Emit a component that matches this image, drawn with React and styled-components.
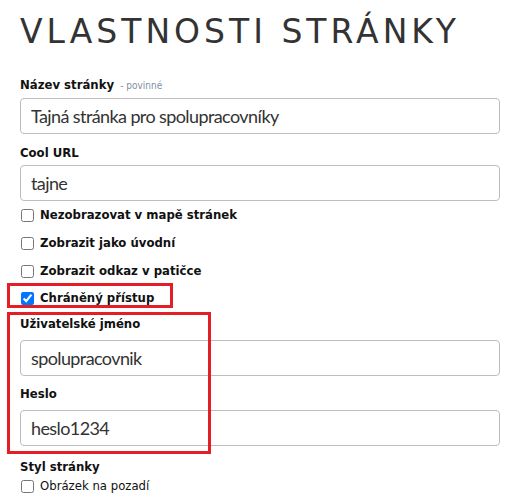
import React from 'react';
import styled, { createGlobalStyle } from 'styled-components';

const GlobalStyle = createGlobalStyle`
  body {
    margin: 0;
    background: #fff;
    color: #222;
    font-family: 'DejaVu Sans Condensed', 'DejaVu Sans', Verdana, sans-serif;
  }
`;

const Page = styled.div`
  width: 480px;
  padding: 0 8px 0 20px;
`;

const Title = styled.h1`
  margin: 0;
  padding-top: 13px;
  height: 67px;
  font-family: 'DejaVu Sans', Verdana, sans-serif;
  font-size: 33px;
  font-weight: normal;
  line-height: 38px;
  letter-spacing: 4px;
  color: #333;
  box-sizing: border-box;
`;

const Label = styled.label`
  display: block;
  margin: ${({ $top = 0 }) => $top}px 0 ${({ $bottom = 4 }) => $bottom}px;
  font-size: 13px;
  font-weight: bold;
  line-height: 16px;
  color: #111;
`;

const Hint = styled.span`
  font-size: 10px;
  line-height: 10px;
  font-weight: normal;
  color: #8190a5;
  margin-left: 2px;
`;

const Input = styled.input`
  display: block;
  width: 100%;
  height: 36px;
  box-sizing: border-box;
  padding: 0 10px;
  border: 1px solid #bdbdbd;
  border-radius: 4px;
  font-family: Lato, 'Open Sans', sans-serif;
  font-size: 18px;
  letter-spacing: -0.6px;
  color: #333;
  background: #fff;
`;

const CheckRow = styled.label`
  display: flex;
  align-items: center;
  gap: 6px;
  height: 16px;
  margin-top: ${({ $top = 12 }) => $top}px;
  font-size: 13px;
  font-weight: ${({ $plain }) => ($plain ? 'normal' : 'bold')};
  line-height: 16px;
  color: #111;

  input {
    width: 13px;
    height: 13px;
    margin: 0 0 0 1px;
    accent-color: #0075ff;
  }
`;

const Highlight = styled.div`
  position: relative;

  &::after {
    content: '';
    position: absolute;
    top: ${({ $top }) => $top}px;
    bottom: ${({ $bottom }) => $bottom}px;
    left: -13px;
    width: ${({ $width }) => $width}px;
    border: 3px solid #e41e26;
    box-sizing: border-box;
    pointer-events: none;
  }
`;

const Checkbox = ({ label, checked, top, plain }) => (
  <CheckRow $top={top} $plain={plain}>
    <input type="checkbox" defaultChecked={checked} />
    {label}
  </CheckRow>
);

export default function App() {
  return (
    <>
      <GlobalStyle />
      <Page>
        <Title>VLASTNOSTI STRÁNKY</Title>
        <Label $top={10} $bottom={5}>
          Název stránky <Hint>- povinné</Hint>
        </Label>
        <Input defaultValue="Tajná stránka pro spolupracovníky" />
        <Label $top={11}>Cool URL</Label>
        <Input defaultValue="tajne" />
        <Checkbox label="Nezobrazovat v mapě stránek" top={6} />
        <Checkbox label="Zobrazit jako úvodní" />
        <Checkbox label="Zobrazit odkaz v patičce" />
        <Highlight $top={-7} $bottom={-2} $width={166}>
          <Checkbox label="Chráněný přístup" top={11} checked />
        </Highlight>
        <Highlight $top={-4} $bottom={-8} $width={204}>
          <Label $top={10} $bottom={8}>Uživatelské jméno</Label>
          <Input defaultValue="spolupracovnik" />
          <Label $top={10} $bottom={8}>Heslo</Label>
          <Input defaultValue="heslo1234" />
        </Highlight>
        <Label $top={13} $bottom={3}>Styl stránky</Label>
        <Checkbox label="Obrázek na pozadí" top={3} plain />
      </Page>
    </>
  );
}
